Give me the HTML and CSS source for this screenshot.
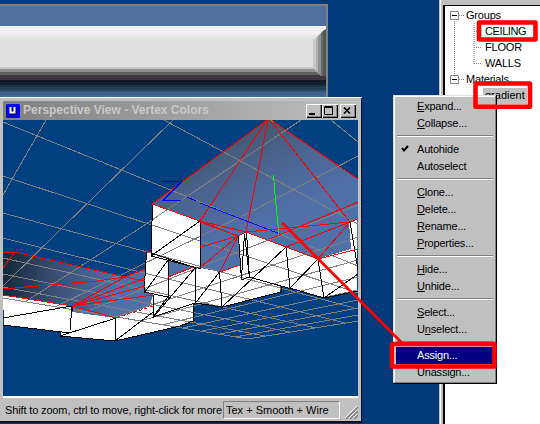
FILE: index.html
```html
<!DOCTYPE html>
<html lang="en">
<head>
<meta charset="utf-8">
<title>Perspective View</title>
<link rel="stylesheet" href="styles.css">
</head>
<body>
<main class="desktop">
  <div class="backdrop-window"><div class="bands"></div><div class="bevel"></div></div>

  <aside class="tree-panel">
    <div class="tree">
      <svg class="tree-lines" width="40" height="110" fill="none" stroke="#808080">
        <path stroke-dasharray="1 1" d="M9.500 15V73M14 9.500h5M14 73.500h5M29 17v42M29 25.500h7M29 41.500h7M29 57.500h7"/>
        <path fill="#fff" d="M5.500 5.500h8v8h-8zM5.500 69.500h8v8h-8z"/>
        <path stroke="#000" d="M7 9.500h5M7 73.500h5"/>
      </svg>
      <div class="row">Groups</div>
      <div class="row child ceiling">CEILING</div>
      <div class="row child">FLOOR</div>
      <div class="row child">WALLS</div>
      <div class="row">Materials</div>
      <div class="row child"><span class="selected">gradient</span></div>
    </div>
  </aside>

  <section class="window">
    <header class="titlebar">
      <svg class="app-icon" width="14" height="14"><rect width="14" height="14" rx="1.500" fill="#00f"/><path d="M5.500 4v5.500h4V4" fill="none" stroke="#000" stroke-width="2"/><path d="M4.500 3v5.500h4V3" fill="none" stroke="#fff" stroke-width="2"/></svg>
      <h1>Perspective View - Vertex Colors</h1>
      <div class="controls">
        <button><svg width="12" height="10"><path d="M2 8h6" stroke="#000" stroke-width="2"/></svg></button>
        <button><svg width="12" height="10" fill="none" stroke="#000"><path d="M1.500 .5h8v8h-8zM1 1.500h9"/></svg></button>
        <button class="close"><svg width="12" height="10" fill="none" stroke="#000" stroke-width="1.700"><path d="M3 1.500l6 6M9 1.500l-6 6"/></svg></button>
      </div>
    </header>
    <svg class="viewport" width="355" height="276" viewBox="3 120 355 276" shape-rendering="crispEdges">
      <defs>
        <linearGradient id="roof" gradientUnits="userSpaceOnUse" x1="225" y1="125" x2="268" y2="220"><stop offset="0" stop-color="#405468"/><stop offset=".45" stop-color="#4a628c"/><stop offset="1" stop-color="#5070a8"/></linearGradient>
        <linearGradient id="wing" gradientUnits="userSpaceOnUse" x1="8" y1="275" x2="115" y2="290"><stop offset="0" stop-color="#182c40"/><stop offset=".4" stop-color="#384c70"/><stop offset="1" stop-color="#5070a8"/></linearGradient>
      </defs>
      <path fill="#004080" d="M3 120h355v276H3z"/>
      <path fill="url(#wing)" d="M3 253l12-1 110 25 20-8 60-10v30l-55 18-34 12-44-12-69-11z"/>
      <path fill="url(#roof)" d="M267 120L152 204l48 17v47l20 4 20-7 46-18 32 12 40-10v-70L271 120z"/>
      <g fill="#fff">
        <path d="M3 295L72 306v6l44 6 34-12 3-11 15-19 26-12 6 4 20 4 20-7-2-29 8-4 39 15 32 12 34-10-2-27 8-3v72l-34 7-34-10-9-2v6l-59 15-27-4v18l-13 5-65 15-55-5v-4l-57-7z"/>
        <path d="M146 251l22 9v37l-24-5zM152 204l48 17v47l-49-12z"/>
      </g>
      <path fill="#5070a8" d="M168 260l26 7-26 10zM72 312v-6l44 12z"/>
      <g fill="none" stroke="#808080">
        <path d="M3 122L358 266M3 176L358 293M3 213L358 309M3 238L345 323M3 258L316 328M3 274L290 332M3 287L265 336M3 298L248 339"/>
        <path d="M3 195L46 120M3 286L60 230 173 120M25 302L137 230 301 120M55 307L250 212 358 156M85 312L358 205M115 317L358 237M140 321L358 260M162 325L358 277M183 328L358 290M202 331L358 300M220 334L358 308M235 337L358 315M248 339L358 321M164 120L358 224M331 120L358 142"/>
      </g>
      <g fill="none" stroke="#000">
        <path d="M152.500 204L151 256l49 12.500V221L151 256M146.500 252L144 292l24 5v-37L145 292M151 253l45 15M195.500 268v35l26.500 4-2.500-35-24 31M168 297l-15 20 42-14M153.500 295v22L195 268M238.500 236l3 44M246.500 232l3 46-5-44-3 44M241 280l8-3 41 11.500M222 307l64-60 4 41 28-29 6 39 34-24M350 222l8 48M222 307l59-15v-6M290 288l34 10 34-7M3 318l69-12-2 24M72 306v5M116 318l-.5 22M60 332v4l55 5 65-15 13-5v-18M3 325l67 8M60 336l56-18M115 341l38-29"/>
      </g>
      <g fill="none" stroke="#f00">
        <path d="M267 120L152 204l48 17 38 15 8-4 40 15 32 12 40-10M271 120l87 59M267 120L200 221M268 120L246 232M270 120l80 102 8-3M200 221l46 11 104-10-32 37M286 247l64-25M270 239l88-37M238 236l-37 11M238 236l-37 31M238 236l-18 36 20-7M200 222l38 14M168 277l26-10M3 253l12-1 110 25 20-8M15 252L3 268M3 289l94-8 28-4 20 4M3 295l69 11 44 12M72 306l53-29M72 306l73-28M72 306l73-20M72 306l81-11"/>
        <path stroke-dasharray="3 3" d="M116 318l37-12M146 252l6-3"/>
      </g>
      <path fill="none" stroke="#00f" d="M162 181.500h20L163 200.500h18M187 197l9 4M200 203l80 31"/>
      <path fill="none" stroke="#0f0" d="M273.500 175l2 25 3.500 35M271 120l2 2"/>
    </svg>
    <footer class="statusbar">
      <span class="hint">Shift to zoom, ctrl to move, right-click for more</span>
      <span class="mode">Tex + Smooth + Wire</span>
      <svg class="grip" width="13" height="13" fill="none"><path stroke="#fff" d="M0 12L12 0M4 12l8-8M8 12l4-4"/><path stroke="#808080" stroke-width="1.500" d="M1 13L13 1M5 13l8-8M9 13l4-4"/></svg>
    </footer>
  </section>

  <nav class="menu">
    <div class="item"><u>E</u>xpand...</div>
    <div class="item"><u>C</u>ollapse...</div>
    <hr>
    <div class="item checked"><svg class="check" width="8" height="8"><path d="M1 3l2 2.500L7 1" fill="none" stroke="#000" stroke-width="2"/></svg>Autohide</div>
    <div class="item">Autoselect</div>
    <hr>
    <div class="item"><u>C</u>lone...</div>
    <div class="item"><u>D</u>elete...</div>
    <div class="item"><u>R</u>ename...</div>
    <div class="item"><u>P</u>roperties...</div>
    <hr>
    <div class="item"><u>H</u>ide...</div>
    <div class="item"><u>U</u>nhide...</div>
    <hr>
    <div class="item"><u>S</u>elect...</div>
    <div class="item">U<u>n</u>select...</div>
    <hr>
    <div class="item active">Assign...</div>
    <div class="item">Unassign...</div>
  </nav>

  <svg class="annotations" width="540" height="424" fill="none" stroke="#f00" stroke-linejoin="round" stroke-linecap="round">
    <path stroke-width="2.800" d="M283 223.500L402 343"/>
    <path stroke-width="4.600" d="M479 22.500h56.500v17H479zM475.500 83.500h54.500v23.300h-54.500zM392 344h102.500v22.500H392z"/>
  </svg>
</main>
</body>
</html>
```
FILE: styles.css
```css
* { box-sizing: border-box; }
body { margin: 0; font: 11px/16px "Liberation Sans", Arial, sans-serif; color: #000; }
.desktop { position: relative; width: 540px; height: 424px; overflow: hidden; background: #003a7b; }

.backdrop-window { position: absolute; left: 0; top: 4px; width: 328px; height: 94px; border: solid #808080; border-width: 2px 2px 0 0; }
.bands { height: 92px; background: linear-gradient(#5070a0 20px, #f0f0f0 20px 28px, #f0e8ee 28px 30px, #e0e8e0 30px 33px, #e0e0e0 33px 61px, #c8c8c8 61px 63px, #909090 63px 66px, #606060 66px 69px, #403840 69px 74px, #101824 74px 76px, #102030 76px 79px, #203040 79px 81px, #204058 81px 84px, #305070 84px 86px, #406088 86px 89px, #4068a0 89px); }
.bevel { position: absolute; right: 0; top: 23px; width: 13px; height: 47px; background: linear-gradient(90deg, #c8c8cc 3px, #b0b0b0 3px 5px, #909090 5px 8px, #686c68 8px 10px, #505850 10px); clip-path: polygon(100% 0, 100% 100%, 60% 100%, 30% 92%, 0 82%, 0 24%, 35% 16%, 75% 4%); }

.tree-panel { position: absolute; left: 439px; top: 0; width: 101px; height: 424px; padding: 5px 0 0 4px; background: #c0c0c0; box-shadow: inset 1px 0 #c0c0c0, inset 2px 0 #fff; }
.tree { position: relative; height: 419px; padding: 2px 0 0 21px; background: #fff; border: solid #000; border-width: 1px 0 0 2px; }
.tree-lines { position: absolute; left: 0; top: 0; }
.row { height: 16px; line-height: 15px; letter-spacing: -.2px; white-space: nowrap; }
.child { padding-left: 19px; }
.ceiling { letter-spacing: -.4px; }
.selected { display: inline-block; height: 16px; margin-left: -2px; padding: 0 2px; background: #c0c0c0; letter-spacing: 0; }

.window { position: absolute; left: 0; top: 97px; width: 362px; height: 326px; padding: 3px 4px 0 3px; background: #c0c0c0; border-top: 1px solid #fff; box-shadow: inset -1px -2px #101020; }
.titlebar { display: flex; align-items: center; height: 19px; padding: 0 2px 0 3px; background: linear-gradient(90deg, #808080, #c0c0c0); }
h1 { flex: 1; margin: 0 0 0 3px; font-size: 12px; line-height: 18px; color: #c8c8c8; white-space: nowrap; position: relative; top: -1px; }
.controls { display: flex; }
button { width: 16px; height: 14px; padding: 1px; border: 0; background: #c0c0c0; box-shadow: inset 1px 1px #fff, inset -1px -1px #000, inset -2px -2px #808080; }
button svg { display: block; }
.close { margin-left: 2px; }
.viewport { display: block; margin-top: 0; }
.statusbar { display: flex; align-items: center; height: 25px; border-top: 2px solid #fff; padding: 1px 0 0 2px; }
.hint { width: 218px; white-space: nowrap; letter-spacing: -.14px; }
.mode { width: 117px; height: 18px; padding-left: 2px; border: 1px solid; border-color: #808080 #fff #fff #808080; white-space: nowrap; }
.grip { margin: 5px 0 0 5px; }

.menu { position: absolute; left: 393px; top: 95px; width: 104px; height: 289px; padding: 3px; background: #c0c0c0; box-shadow: inset -1px -1px #000, inset 1px 1px #dfdfdf, inset -2px -2px #808080, inset 2px 2px #fff; }
.item { display: flex; align-items: center; height: 17px; padding: 0 0 2px 21px; white-space: pre; letter-spacing: -.2px; }
.item u { text-underline-offset: 1px; text-decoration-thickness: 1px; }
.checked { padding-left: 5px; }
.check { margin-right: 8px; }
.active { background: #000080; color: #fff; }
hr { height: 2px; margin: 3px 1px 4px; border: solid; border-width: 1px 0; border-color: #808080 #fff #fff; }
.annotations { position: absolute; left: 0; top: 0; }
```
